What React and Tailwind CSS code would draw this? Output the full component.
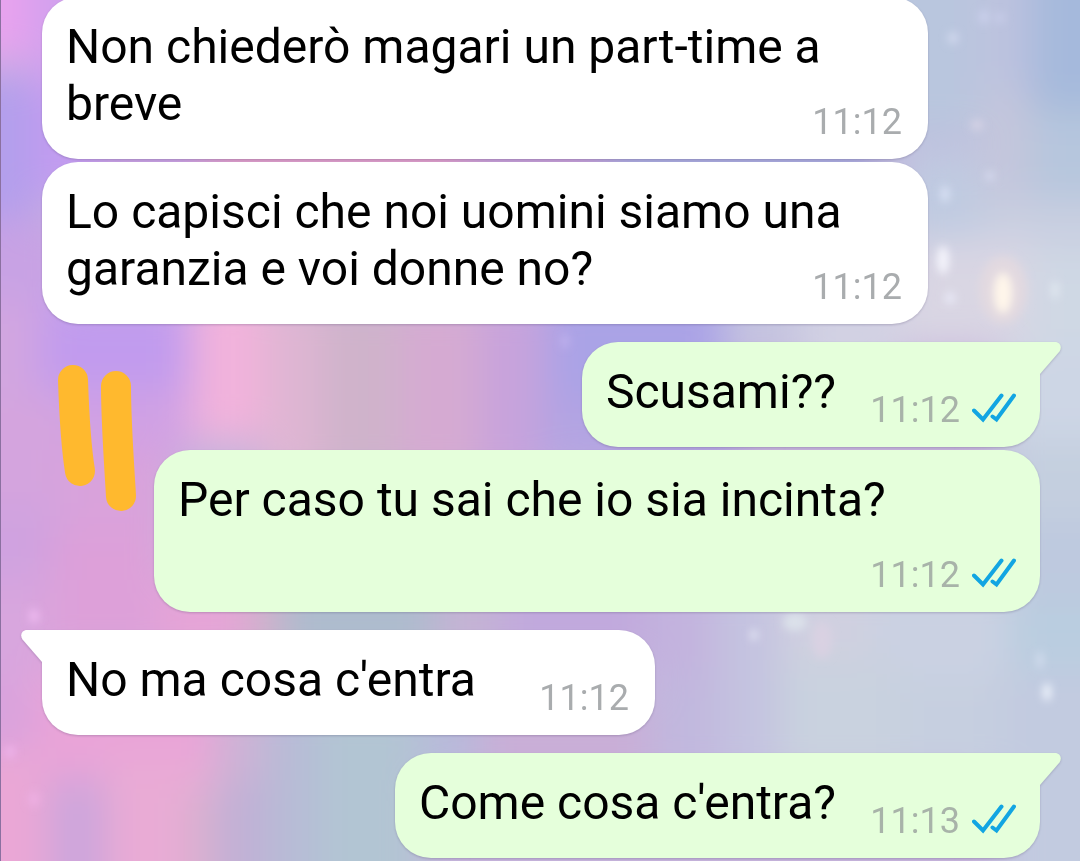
import React from "react";

const messages = [
  { id: 1, text: "Non chiederò magari un part-time a breve", time: "11:12" },
  { id: 2, text: "Lo capisci che noi uomini siamo una garanzia e voi donne no?", time: "11:12" },
  { id: 3, text: "Scusami??", time: "11:12", mine: true, first: true },
  { id: 4, text: "Per caso tu sai che io sia incinta?", time: "11:12", mine: true },
  { id: 5, text: "No ma cosa c'entra", time: "11:12", first: true },
  { id: 6, text: "Come cosa c'entra?", time: "11:13", mine: true, first: true },
];

// soft colour patches of the wallpaper: x, y, width, height, fill
const patches = [
  // left edge
  [-60, -60, 95, 120, "#e8a3ee"],
  [30, -60, 60, 150, "#d2a0ee"],
  [-60, 75, 95, 145, "#b39fec"],
  [35, 90, 60, 110, "#c29bf0"],
  [-60, 220, 130, 90, "#c8a2e4"],
  [-60, 300, 100, 110, "#d2a6e0"],
  // strip behind the first bubbles
  [95, 60, 110, 170, "#c6a0e0"],
  [205, 60, 260, 170, "#dc9cc8"],
  [465, 60, 140, 170, "#c29cd4"],
  [605, 60, 270, 170, "#a9a9dc"],
  // top right
  [870, -60, 110, 200, "#b9c6de"],
  [980, -60, 60, 150, "#bdc2df"],
  [1030, -60, 110, 170, "#a5b9dc"],
  [980, 90, 50, 110, "#c5c6dc"],
  [1030, 110, 110, 110, "#b6c6dd"],
  [900, 150, 80, 90, "#bfcbe1"],
  [980, 200, 160, 60, "#c9cfe1"],
  [900, 240, 130, 110, "#d9d6e3"],
  [1030, 250, 110, 110, "#cfd8e4"],
  // middle band
  [40, 300, 150, 90, "#c19bee"],
  [40, 390, 150, 70, "#d0a1e4"],
  [192, 290, 75, 150, "#f2b2dc"],
  [262, 300, 65, 180, "#dfb6d3"],
  [320, 300, 90, 180, "#cfb3cb"],
  [400, 300, 90, 180, "#d5aad2"],
  [480, 300, 75, 180, "#c7a3dc"],
  [545, 290, 180, 130, "#aaa3e6"],
  [540, 400, 200, 70, "#b3a4e2"],
  [725, 290, 80, 70, "#c5c4e0"],
  [800, 290, 100, 90, "#d2d1e3"],
  [1000, 350, 140, 90, "#cdd6e5"],
  [1000, 440, 140, 90, "#c4cfdf"],
  [1000, 520, 140, 100, "#bec9df"],
  // left, beside the long reply
  [-60, 400, 130, 120, "#d4a4de"],
  [60, 450, 110, 90, "#d9a2db"],
  [-60, 510, 120, 70, "#cfa2e0"],
  [50, 530, 120, 130, "#dda0d9"],
  [-60, 580, 110, 110, "#d8a6de"],
  // strip under the long reply
  [160, 580, 90, 80, "#e6a4d7"],
  [245, 580, 40, 80, "#d2b0cb"],
  [280, 580, 160, 80, "#adbccd"],
  [435, 580, 70, 80, "#c4b3d4"],
  [500, 580, 150, 80, "#c1a9dd"],
  [645, 580, 80, 120, "#c3b3de"],
  [715, 580, 70, 200, "#c4c3e0"],
  [780, 580, 90, 90, "#d0d0e0"],
  [870, 580, 140, 110, "#cad1e2"],
  [1010, 600, 130, 80, "#b9cde0"],
  // bottom left
  [-60, 680, 100, 80, "#d9a3dd"],
  [-60, 750, 110, 180, "#eaa7d6"],
  [35, 670, 180, 110, "#e9a4d8"],
  [50, 780, 60, 150, "#cba5dc"],
  [105, 760, 115, 170, "#e9abd5"],
  [185, 790, 40, 140, "#d9b0cf"],
  [215, 700, 50, 90, "#cdb2d5"],
  [215, 780, 75, 150, "#c1b0d6"],
  [265, 700, 60, 230, "#b7bbd7"],
  [315, 700, 110, 230, "#b2c5d3"],
  [420, 700, 60, 80, "#b8bada"],
  [480, 700, 180, 80, "#c9aed7"],
  [650, 680, 70, 100, "#c1b8de"],
  // bottom right
  [780, 660, 120, 120, "#c9d2df"],
  [900, 680, 110, 100, "#c6cfe0"],
  [1000, 670, 140, 260, "#c2cbe0"],
];

// cx, cy, rx, ry, fill
const stars = [
  [953, 38, 5, 6, "#d2d9ee"],
  [984, 17, 5, 7, "#cbd0ec"],
  [1000, 18, 4, 5, "#cbd0ec"],
  [977, 125, 6, 5, "#d8d4e6"],
  [990, 176, 4, 4, "#dcdff3"],
  [945, 194, 4, 8, "#dbe3f6"],
  [1003, 290, 24, 34, "#e2d9e0"],
  [943, 260, 6, 14, "#f4f4fc"],
  [950, 298, 5, 6, "#e9e9f7"],
  [1003, 293, 9, 20, "#fff6ea"],
  [1055, 290, 3, 9, "#e4ebf3"],
  [565, 341, 3, 7, "#c4b5f0"],
  [34, 616, 5, 7, "#eebaf0"],
  [10, 752, 5, 6, "#efb4ec"],
  [34, 799, 5, 7, "#efb0e4"],
  [754, 635, 3, 5, "#eceffa"],
  [795, 622, 12, 9, "#dbe1ea"],
  [822, 640, 10, 18, "#d9d1e2"],
  [1040, 660, 3, 9, "#d5dff0"],
  [1047, 692, 4, 9, "#f0f5fd"],
];

const Wallpaper = () => (
  <svg
    className="absolute inset-0 h-full w-full"
    viewBox="0 0 1080 861"
    preserveAspectRatio="none"
    aria-hidden="true"
  >
    <defs>
      <filter id="haze" filterUnits="userSpaceOnUse" x="-60" y="-60" width="1200" height="981">
        <feGaussianBlur stdDeviation="19" />
      </filter>
      <filter id="glow" filterUnits="userSpaceOnUse" x="-60" y="-60" width="1200" height="981">
        <feGaussianBlur stdDeviation="4" />
      </filter>
    </defs>
    <rect width="1080" height="861" fill="#c6b4dc" />
    <g filter="url(#haze)">
      {patches.map(([x, y, w, h, fill], i) => (
        <rect key={i} x={x} y={y} width={w} height={h} fill={fill} />
      ))}
    </g>
    <g filter="url(#glow)">
      {stars.map(([cx, cy, rx, ry, fill], i) => (
        <ellipse key={i} cx={cx} cy={cy} rx={rx} ry={ry} fill={fill} />
      ))}
    </g>
    <rect width="1" height="861" fill="#8b70a0" />
  </svg>
);

// two hand drawn marker strokes
const Marker = () => (
  <svg
    className="absolute left-14 top-[362px] h-[152px] w-[84px]"
    viewBox="0 0 84 152"
    fill="none"
    stroke="#ffb92e"
    strokeWidth="30"
    strokeLinecap="round"
    aria-hidden="true"
  >
    <path d="M17 18C18 48 19 78 24 109" />
    <path d="M60 24C60 60 63 100 65 134" />
  </svg>
);

const Ticks = () => (
  <svg
    className="mb-[5px] h-[30px] w-11"
    viewBox="0 0 44 30"
    fill="none"
    stroke="#12a5e2"
    strokeWidth="4"
    strokeLinecap="round"
    role="img"
    aria-label="Letto"
  >
    <path d="M2 17.5L11 26.5L29.500 2.500" />
    <path d="M20.500 23.500L24.500 26.500L42 2.500" />
  </svg>
);

const Tail = ({ mine }) => (
  <svg
    className={
      mine
        ? "absolute left-full top-0 h-8 w-[21px] text-[#e5ffdb]"
        : "absolute right-full top-0 h-8 w-[21px] -scale-x-100 text-white"
    }
    viewBox="0 0 21 32"
    fill="currentColor"
    aria-hidden="true"
  >
    <path d="M0 0H15C20 0 22.5 5 19.5 9.500L0 32Z" />
  </svg>
);

const Bubble = ({ text, time, mine, first }) => {
  const side = mine ? "self-end bg-[#e5ffdb]" : "self-start bg-white";
  const corner = first ? (mine ? "rounded-tr-none" : "rounded-tl-none") : "";

  return (
    <li
      className={`relative grid max-w-[886px] rounded-[36px] drop-shadow-[0_1px_1px_rgba(60,50,90,0.25)] ${side} ${corner} ${
        first ? "mt-[18px]" : "mt-[3px]"
      }`}
    >
      {first && <Tail mine={mine} />}
      <p className="col-start-1 row-start-1 px-6 pt-[21px] pb-[27px] text-[48px] leading-[57px] text-black">
        {text}
        {/* keeps the last line clear of the time */}
        <span className={mine ? "inline-block h-1 w-[180px]" : "inline-block h-1 w-[155px]"} />
      </p>
      <div
        className={`col-start-1 row-start-1 mb-[19px] flex items-end gap-3 self-end justify-self-end ${
          mine ? "mr-6" : "mr-[26px]"
        }`}
      >
        <time
          className={
            mine
              ? "text-[36px] leading-[36px] text-[#a8b3a9]"
              : "text-[36px] leading-[36px] text-[#a9acae]"
          }
        >
          {time}
        </time>
        {mine && <Ticks />}
      </div>
    </li>
  );
};

const App = () => {
  return (
    <main className="relative min-h-screen overflow-hidden font-['Roboto',sans-serif]">
      <Wallpaper />
      {/* the list starts scrolled by a few pixels */}
      <ul className="relative -mt-1.5 flex flex-col pr-10 pl-[42px]">
        {messages.map((m) => (
          <Bubble key={m.id} {...m} />
        ))}
      </ul>
      <Marker />
    </main>
  );
};

export default App;
